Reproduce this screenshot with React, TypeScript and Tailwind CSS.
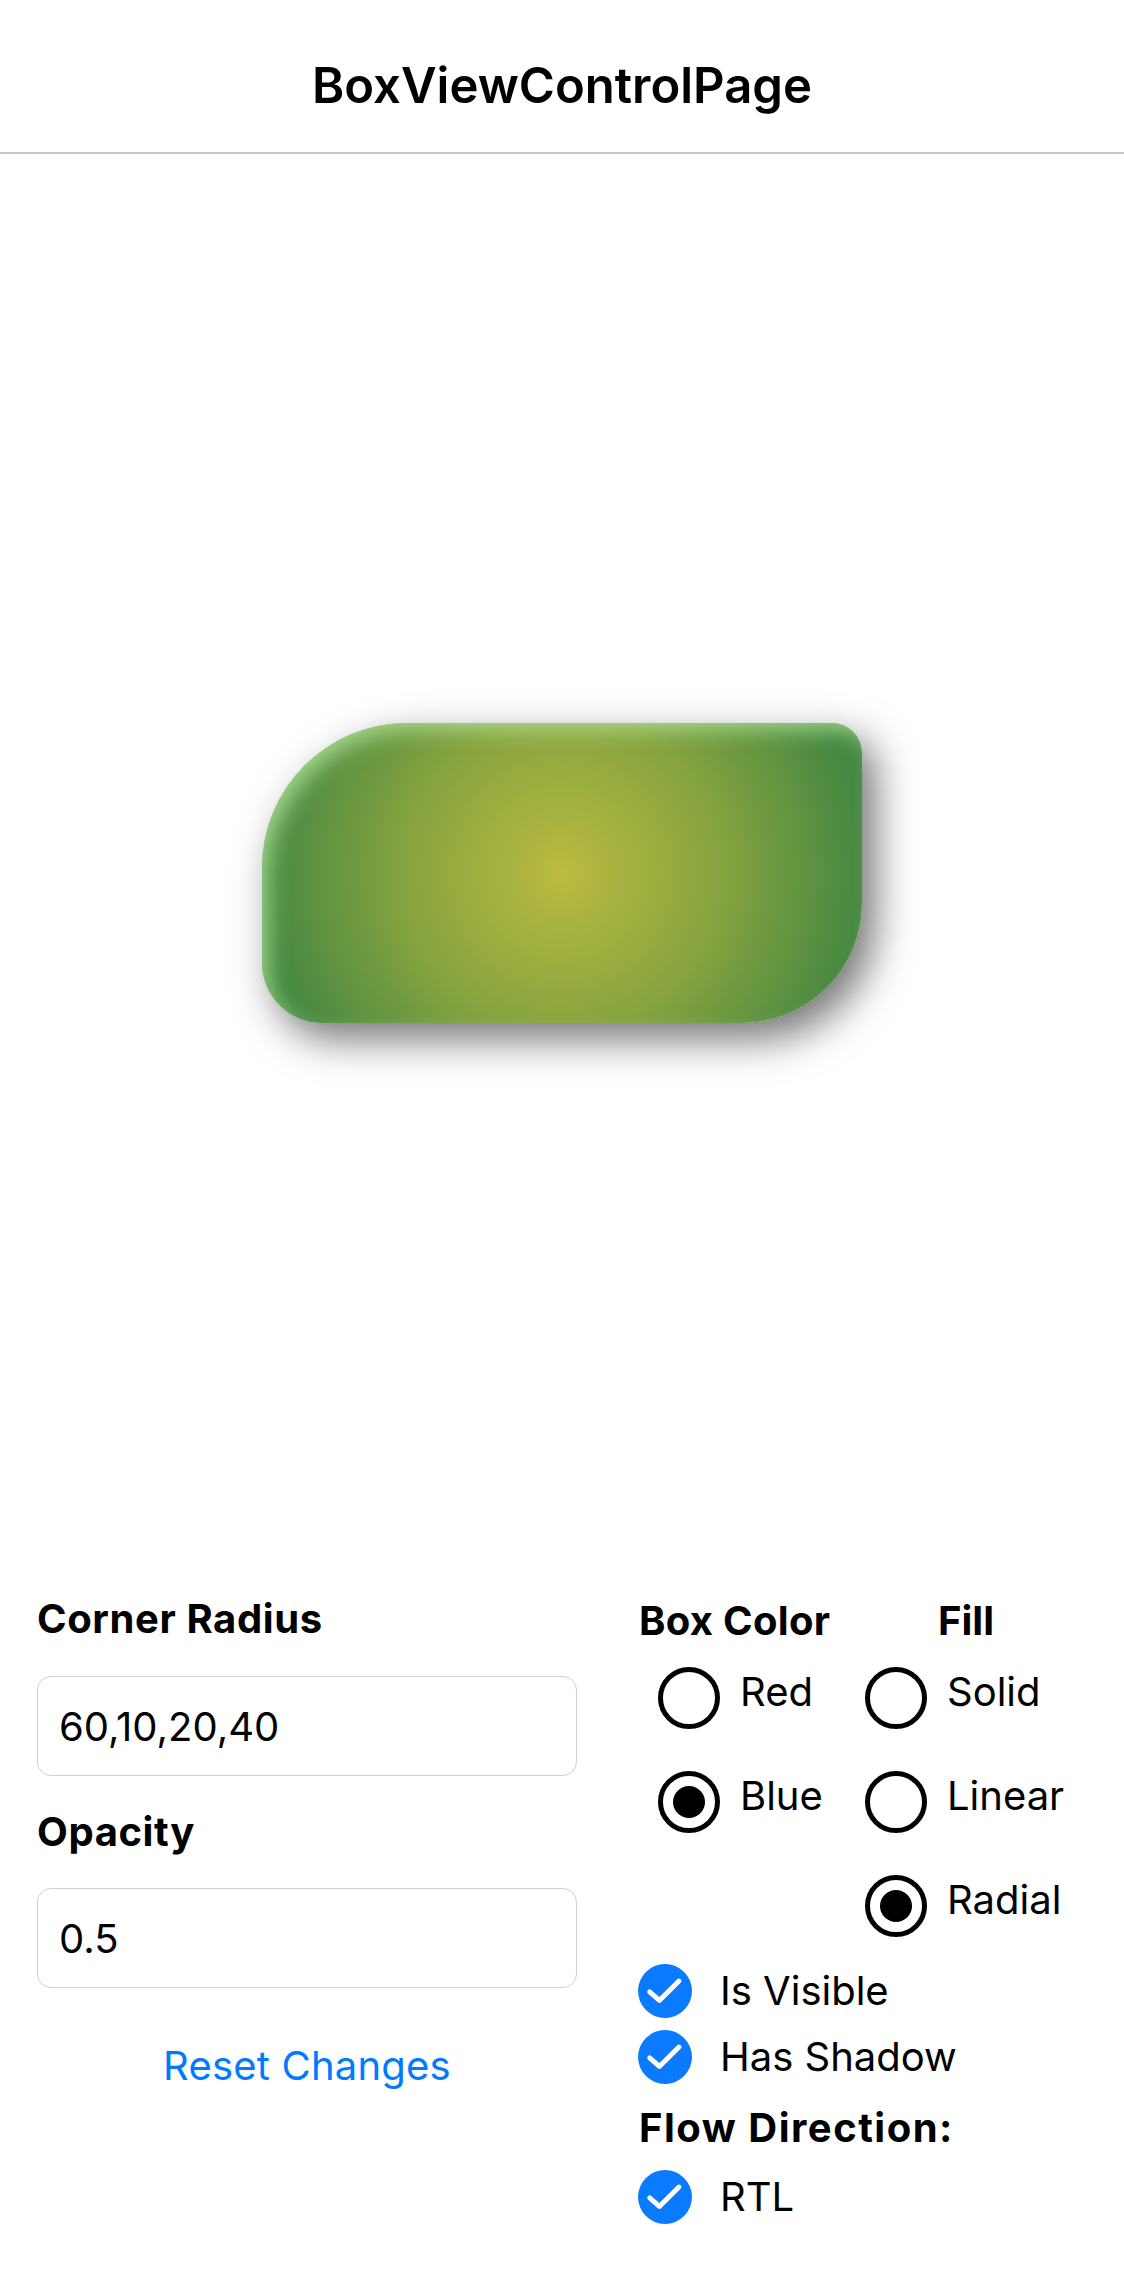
import { useState } from "react";

function Radio({ checked, label }: { checked?: boolean; label: string }) {
  return (
    <div className="flex h-[104px] items-center gap-[20px]">
      <div className="flex h-[62px] w-[62px] shrink-0 items-center justify-center rounded-full border-[5px] border-black">
        {checked && <div className="h-[32px] w-[32px] rounded-full bg-black" />}
      </div>
      <span className="mb-[12px] text-[40px] leading-[48px] text-black">{label}</span>
    </div>
  );
}

function Check({ label }: { label: string }) {
  return (
    <div className="flex h-[66px] items-center gap-[28px]">
      <div className="flex h-[54px] w-[54px] shrink-0 items-center justify-center rounded-full bg-[#0a7aff]">
        <svg viewBox="0 0 24 24" className="h-[54px] w-[54px]" fill="none">
          <path
            d="M5.2 12.4 9.5 16.2 18.2 7.6"
            stroke="white"
            strokeWidth="2.2"
            strokeLinecap="round"
            strokeLinejoin="round"
          />
        </svg>
      </div>
      <span className="text-[40px] leading-[48px] text-black">{label}</span>
    </div>
  );
}

export default function App() {
  const [radius, setRadius] = useState("60,10,20,40");
  const [opacity, setOpacity] = useState("0.5");

  return (
    <div className="min-h-[2286px] w-full bg-white font-['Inter',sans-serif] text-black">
      {/* nav bar */}
      <header className="flex h-[154px] items-center justify-center border-b-2 border-[#c8c8c8] pt-[20px]">
        <h1 className="text-[49px] font-semibold leading-[58px]">BoxViewControlPage</h1>
      </header>

      {/* preview area */}
      <div className="flex h-[1437px] items-center justify-center">
        <div className="h-[300px] w-[600px] rounded-[145px_30px_120px_60px] bg-[radial-gradient(circle_300px_at_50%_50%,#bdbb3f_0%,#a6b240_20%,#8aa53f_50%,#468842_100%)] shadow-[inset_10px_10px_22px_-4px_rgba(185,235,160,0.8),13px_16px_40px_rgba(0,0,0,0.55)]" />
      </div>

      {/* controls */}
      <div className="grid grid-cols-[540px_1fr] gap-x-[61px] pl-[37px] pt-[4px]">
        <div className="flex flex-col">
          <label className="text-[40px] font-bold leading-[48px] tracking-[0.6px]">Corner Radius</label>
          <input
            value={radius}
            onChange={(e) => setRadius(e.target.value)}
            className="mt-[33px] h-[100px] w-[540px] rounded-[14px] border border-[#cfcfcf] px-[21px] text-[40px] outline-none"
          />
          <label className="mt-[32px] text-[40px] font-bold leading-[48px] tracking-[0.6px]">Opacity</label>
          <input
            value={opacity}
            onChange={(e) => setOpacity(e.target.value)}
            className="mt-[32px] h-[100px] w-[540px] rounded-[14px] border border-[#cfcfcf] px-[21px] text-[40px] outline-none"
          />
          <button className="mt-[54px] self-center text-[40px] leading-[48px] tracking-[0.2px] text-[#007aff]">
            Reset Changes
          </button>
        </div>

        <div className="flex flex-col">
          <div className="grid grid-cols-[227px_1fr] pt-[2px]">
            <span className="pl-[1px] text-[40px] font-bold leading-[48px] tracking-[0.3px]">Box Color</span>
            <span className="pl-[73px] text-[40px] font-bold leading-[48px]">Fill</span>
          </div>
          <div className="mt-px grid grid-cols-[227px_1fr]">
            <div className="flex flex-col pl-[20px]">
              <Radio label="Red" />
              <Radio label="Blue" checked />
            </div>
            <div className="flex flex-col">
              <Radio label="Solid" />
              <Radio label="Linear" />
              <Radio label="Radial" checked />
            </div>
          </div>
          <Check label="Is Visible" />
          <Check label="Has Shadow" />
          <span className="mt-[14px] pl-[1px] text-[40px] font-bold leading-[48px] tracking-[1.5px]">
            Flow Direction:
          </span>
          <div className="mt-[12px]">
            <Check label="RTL" />
          </div>
        </div>
      </div>
    </div>
  );
}
